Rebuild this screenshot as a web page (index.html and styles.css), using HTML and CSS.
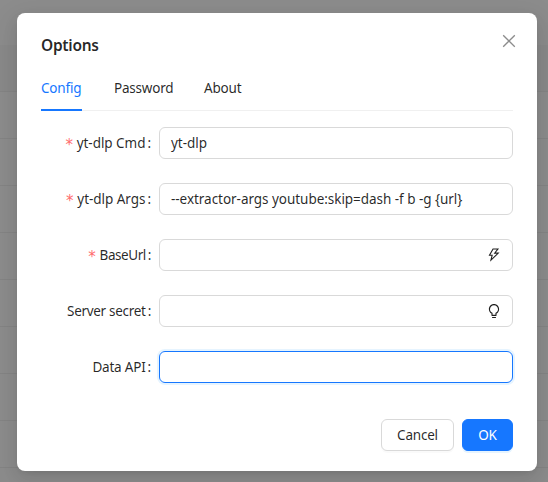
FILE: index.html
```html
<!DOCTYPE html>
<html lang="en">
<head>
<meta charset="utf-8">
<title>Options</title>
<link rel="stylesheet" href="styles.css">
</head>
<body>
<main class="backdrop">
  <section class="modal" role="dialog" aria-labelledby="title">
    <header class="header">
      <h1 class="title" id="title">Options</h1>
      <button class="close" type="button">
        <svg viewBox="0 0 16 16" width="16" height="16"><path d="M2.2 2.2 13.8 13.8M13.8 2.2 2.2 13.8"/></svg>
      </button>
    </header>
    <nav class="tabs">
      <a class="tab tab-active">Config</a>
      <a class="tab tab-password">Password</a>
      <a class="tab tab-about">About</a>
    </nav>
    <form class="form">
      <label class="label label-wide"><span class="required">*</span><span class="name">yt-dlp Cmd</span><span class="colon">:</span></label>
      <div class="input"><span class="value">yt-dlp</span></div>
      <label class="label label-wide"><span class="required">*</span><span class="name">yt-dlp Args</span><span class="colon">:</span></label>
      <div class="input"><span class="value">--extractor-args youtube:skip=dash -f b -g {url}</span></div>
      <label class="label label-tight"><span class="required">*</span><span class="name">BaseUrl</span><span class="colon">:</span></label>
      <div class="input">
        <svg class="icon" viewBox="64 64 896 896" width="14" height="14"><path d="M848 359.3H627.7L825.8 109c4.1-5.3.4-13-6.3-13H436c-2.8 0-5.5 1.5-6.9 4L170 547.5c-3.1 5.3.7 12 6.9 12h174.4l-89.4 357.6c-1.9 7.8 7.5 13.3 13.3 7.7L853.5 373c5.2-4.9 1.7-13.7-5.5-13.7zM378.2 732.5l60.3-241H281.1l189.6-327.4h224.6L487 427.4h211L378.2 732.5z"/></svg>
      </div>
      <label class="label label-narrow"><span class="name">Server secret</span><span class="colon">:</span></label>
      <div class="input">
        <svg class="icon" viewBox="64 64 896 896" width="14" height="14"><path d="M632 888H392c-4.4 0-8 3.6-8 8v32c0 17.7 14.3 32 32 32h192c17.7 0 32-14.3 32-32v-32c0-4.4-3.6-8-8-8zM512 64c-181.1 0-328 146.9-328 328 0 121.4 66 227.4 164 284.1V792c0 17.7 14.3 32 32 32h264c17.7 0 32-14.3 32-32V676.1c98-56.7 164-162.7 164-284.1 0-181.1-146.9-328-328-328zm127.9 549.8L604 634.6V752H420V634.6l-35.9-20.8C305.4 568.3 256 484.7 256 392c0-141.4 114.6-256 256-256s256 114.6 256 256c0 92.7-49.4 176.3-128.1 221.8z"/></svg>
      </div>
      <label class="label"><span class="name">Data API</span><span class="colon">:</span></label>
      <div class="input input-focused"></div>
    </form>
    <footer class="footer">
      <button class="button" type="button">Cancel</button>
      <button class="button button-primary" type="button">OK</button>
    </footer>
  </section>
</main>
</body>
</html>
```
FILE: styles.css
```css
* {
  box-sizing: border-box;
}

body {
  margin: 0;
  font: 13.5px/22px "Noto Sans", "Open Sans", sans-serif;
  letter-spacing: -0.2px;
  color: rgba(0, 0, 0, 0.85);
}

/* Dimmed table rows behind the dialog */
.backdrop {
  height: 482px;
  padding: 13px 11px 0 17px;
  overflow: hidden;
  background:
    linear-gradient(#898989, #898989) 0 45px / 100% 46px no-repeat,
    repeating-linear-gradient(#848484 0 1px, transparent 1px 47px) 0 91px / 100% 400px no-repeat,
    #8c8c8c;
}

.modal {
  width: 520px;
  height: 458px;
  padding: 20px 24px;
  background: #fff;
  border-radius: 8px;
  box-shadow: 0 6px 16px rgba(0, 0, 0, 0.08), 0 3px 6px -4px rgba(0, 0, 0, 0.12), 0 9px 28px 8px rgba(0, 0, 0, 0.05);
}

.header {
  display: flex;
  justify-content: space-between;
  height: 24px;
  margin-bottom: 8px;
}

.title {
  margin: 0;
  font-size: 15.5px;
  font-weight: 600;
  line-height: 24px;
  letter-spacing: -0.3px;
}

.close {
  width: 22px;
  height: 22px;
  margin: -4px -8px 0 0;
  padding: 0;
  border: 0;
  background: none;
}

.close svg {
  display: block;
  margin: 1px 0 0 2px;
  fill: none;
  stroke: #8c8c8c;
  stroke-width: 1.3;
}

.tabs {
  display: flex;
  gap: 32px;
  height: 46px;
  margin-bottom: 16px;
  border-bottom: 1px solid #f0f0f0;
}

.tab {
  height: 46px;
  padding: 12px 0;
}

.tab-active {
  width: 41px;
  color: #1677ff;
  border-bottom: 2px solid #1677ff;
}

.tab-password {
  width: 58px;
}

.form {
  display: grid;
  grid-template-columns: 118px 354px;
  grid-auto-rows: 32px;
  row-gap: 24px;
}

.label {
  display: flex;
  justify-content: flex-end;
  align-items: center;
  padding-right: 8px;
  white-space: nowrap;
}

.label-wide {
  letter-spacing: -0.04px;
}

.label-narrow {
  letter-spacing: -0.3px;
}

.label-tight {
  letter-spacing: -0.45px;
}

.required {
  width: 7px;
  margin-right: 4px;
  font: 15px/14px "DejaVu Sans Mono", monospace;
  letter-spacing: 0;
  text-indent: -1px;
  padding-top: 4px;
  color: #ff6c6e;
}

.colon {
  margin-left: 2px;
}

.input {
  display: flex;
  align-items: center;
  padding: 0 11px;
  border: 1px solid #d9d9d9;
  border-radius: 6px;
}

.value {
  letter-spacing: -0.04px;
}

.input-focused {
  border-color: #1677ff;
  box-shadow: 0 0 0 2px rgba(5, 145, 255, 0.1);
}

.icon {
  margin-left: auto;
  fill: rgba(0, 0, 0, 0.88);
}

.footer {
  display: flex;
  justify-content: flex-end;
  gap: 8px;
  margin-top: 36px;
}

.button {
  width: 73px;
  height: 32px;
  padding: 0;
  font: inherit;
  letter-spacing: inherit;
  color: inherit;
  background: #fff;
  border: 1px solid #d9d9d9;
  border-radius: 6px;
  box-shadow: 0 2px 0 rgba(0, 0, 0, 0.02);
}

.button-primary {
  width: 51px;
  color: #fff;
  background: #1677ff;
  border-color: #1677ff;
  box-shadow: 0 2px 0 rgba(5, 145, 255, 0.1);
}
```
